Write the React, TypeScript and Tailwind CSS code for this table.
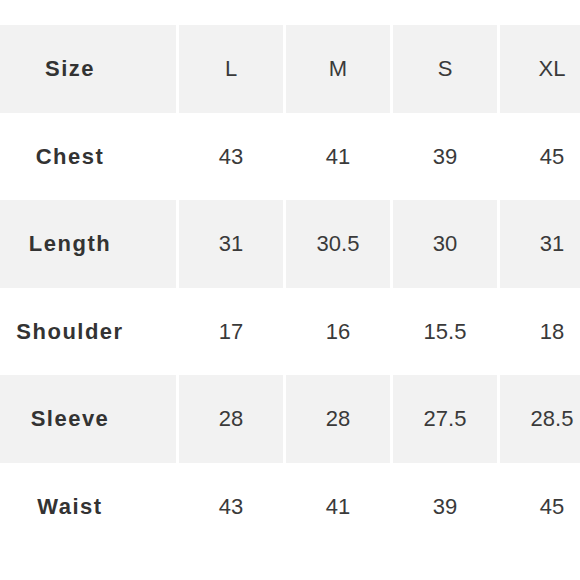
import React from 'react';

const SIZES = ['L', 'M', 'S', 'XL'];

const ROWS: { label: string; values: string[] }[] = [
  { label: 'Chest',    values: ['43', '41', '39', '45'] },
  { label: 'Length',   values: ['31', '30.5', '30', '31'] },
  { label: 'Shoulder', values: ['17', '16', '15.5', '18'] },
  { label: 'Sleeve',   values: ['28', '28', '27.5', '28.5'] },
  { label: 'Waist',    values: ['43', '41', '39', '45'] },
];

function Row({ label, values, shaded }: { label: string; values: string[]; shaded: boolean }) {
  const cell = shaded ? 'bg-[#f2f2f2]' : 'bg-white';
  return (
    <>
      <div className={`${cell} h-[87.5px] flex items-center justify-center font-bold tracking-[1.5px] text-[22px] text-[#333]`}>
        {label}
      </div>
      {values.map((v, i) => (
        <div key={i} className={`${cell} h-[87.5px] flex items-center justify-center text-[22px] text-[#3a3a3a]`}>
          {v}
        </div>
      ))}
    </>
  );
}

export default function App() {
  return (
    <div className="w-[580px] h-[580px] overflow-hidden bg-white pt-[25px]" style={{ fontFamily: '"Liberation Sans", Arial, sans-serif' }}>
      <div className="ml-[-36px] w-[640px] grid grid-cols-[212px_104px_104px_104px_104px] gap-x-[3px]">
        <Row label="Size" values={SIZES} shaded />
        {ROWS.map((r, i) => (
          <Row key={r.label} label={r.label} values={r.values} shaded={i % 2 === 1} />
        ))}
      </div>
    </div>
  );
}
